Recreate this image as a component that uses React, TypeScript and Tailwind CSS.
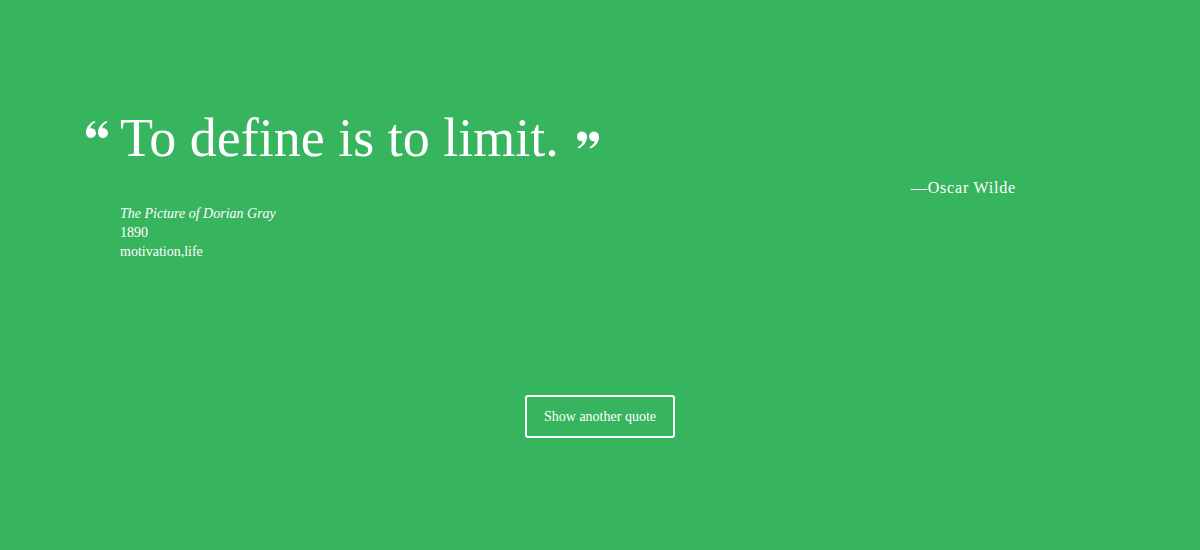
function QuoteMark({ flip = false, className = "" }: { flip?: boolean; className?: string }) {
  // two filled "6" drops; flipped for the closing mark
  return (
    <svg viewBox="0 0 22 17" className={className} style={flip ? { transform: "rotate(180deg)" } : undefined} fill="white">
      <path d="M5 17a5 5 0 0 1-5-5.2C0 6.5 3.4 2 8.6 0l.8 1.3C6.3 3 4.5 5.2 4.3 7.2A4.9 4.9 0 0 1 10 12a5 5 0 0 1-5 5z" />
      <path d="M17 17a5 5 0 0 1-5-5.2C12 6.5 15.4 2 20.6 0l.8 1.3C18.3 3 16.5 5.2 16.3 7.2A4.9 4.9 0 0 1 22 12a5 5 0 0 1-5 5z" />
    </svg>
  );
}

export default function App() {
  return (
    <div
      className="min-h-[550px] w-full bg-[#37b55e] text-white"
      style={{ fontFamily: '"Liberation Serif", "Times New Roman", serif' }}
    >
      <div className="mx-auto w-[960px] pt-[103px]">
        <div className="relative flex items-start">
          <QuoteMark className="absolute -left-[34px] top-[18px] h-[17px] w-[22px]" />
          <h1 className="text-[54px] leading-[70px]">To define is to limit.</h1>
          <QuoteMark flip className="ml-[18px] mt-[28px] h-[18px] w-[22px]" />
        </div>
        <p className="mt-[5px] mr-[64px] text-right text-[16px] leading-[20px] tracking-[0.8px]">—Oscar Wilde</p>
        <div className="mt-[6px] text-[14px] leading-[19px]">
          <p className="italic">The Picture of Dorian Gray</p>
          <p>1890</p>
          <p>motivation,life</p>
        </div>
        <div className="mt-[134px] flex justify-center">
          <button className="h-[43px] w-[150px] rounded-[3px] border-2 border-white text-[14px]">
            Show another quote
          </button>
        </div>
      </div>
    </div>
  );
}
